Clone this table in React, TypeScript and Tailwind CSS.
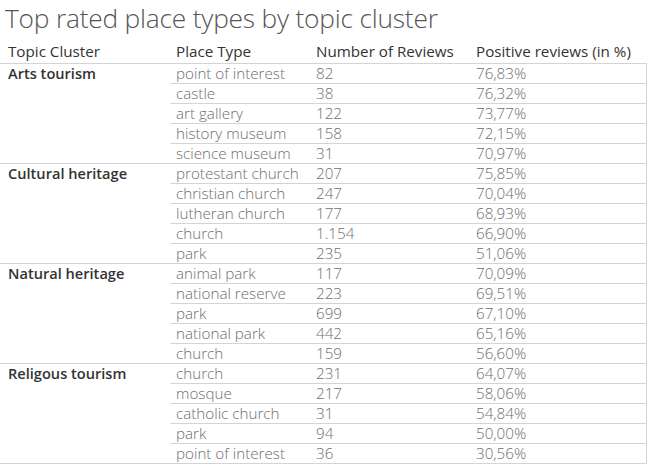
import React from "react";

type Row = [string, string, string];
const groups: { name: string; rows: Row[] }[] = [
  {
    name: "Arts tourism",
    rows: [
      ["point of interest", "82", "76,83%"],
      ["castle", "38", "76,32%"],
      ["art gallery", "122", "73,77%"],
      ["history museum", "158", "72,15%"],
      ["science museum", "31", "70,97%"],
    ],
  },
  {
    name: "Cultural heritage",
    rows: [
      ["protestant church", "207", "75,85%"],
      ["christian church", "247", "70,04%"],
      ["lutheran church", "177", "68,93%"],
      ["church", "1.154", "66,90%"],
      ["park", "235", "51,06%"],
    ],
  },
  {
    name: "Natural heritage",
    rows: [
      ["animal park", "117", "70,09%"],
      ["national reserve", "223", "69,51%"],
      ["park", "699", "67,10%"],
      ["national park", "442", "65,16%"],
      ["church", "159", "56,60%"],
    ],
  },
  {
    name: "Religous tourism",
    rows: [
      ["church", "231", "64,07%"],
      ["mosque", "217", "58,06%"],
      ["catholic church", "31", "54,84%"],
      ["park", "94", "50,00%"],
      ["point of interest", "36", "30,56%"],
    ],
  },
];

export default function App() {
  return (
    <div
      className="w-[647px] h-[467px] bg-white overflow-hidden"
      style={{ fontFamily: '"Open Sans", "Noto Sans", sans-serif' }}
    >
      <div className="h-[40px] pl-[5px] pt-[1px] text-[26.3px] leading-[34px] font-light text-[#555555] tracking-[-0.2px] whitespace-nowrap">
        Top rated place types by topic cluster
      </div>
      <div className="flex h-[24px] items-end pb-[2px] border-b border-[#d4d4d4] text-[15.2px] leading-[20px] text-[#333333] w-[647px] whitespace-nowrap">
        <div className="w-[170px] pl-[8px]">Topic Cluster</div>
        <div className="w-[140px] pl-[6px]">Place Type</div>
        <div className="w-[160px] pl-[6px]">Number of Reviews</div>
        <div className="w-[176px] pl-[6px]">Positive reviews (in %)</div>
      </div>
      <div className="w-[647px] border-r border-[#d4d4d4]">
        {groups.map((g) => (
          <div key={g.name} className="flex border-b border-[#d4d4d4]">
            <div className="w-[170px] pl-[8px] text-[14.6px] leading-[19px] font-semibold text-[#333333] whitespace-nowrap">
              {g.name}
            </div>
            <div className="flex-1">
              {g.rows.map((r, i) => (
                <div
                  key={i}
                  className={
                    "flex items-center text-[15.2px] leading-[19px] text-[#6e6e6e] font-light whitespace-nowrap " +
                    (i < g.rows.length - 1 ? "h-[20px] border-b border-[#d4d4d4]" : "h-[19px]")
                  }
                >
                  <div className="w-[140px] pl-[6px]">{r[0]}</div>
                  <div className="w-[160px] pl-[6px]">{r[1]}</div>
                  <div className="flex-1 pl-[6px]">{r[2]}</div>
                </div>
              ))}
            </div>
          </div>
        ))}
      </div>
    </div>
  );
}
